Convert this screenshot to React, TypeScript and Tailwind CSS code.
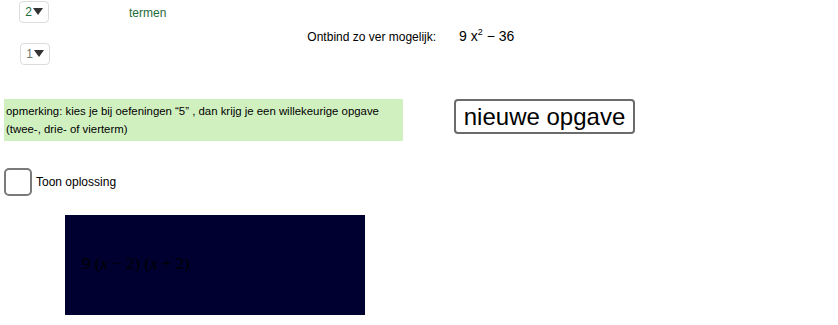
import React from "react";

const Dropdown = (props: { value: string; green?: boolean }) => {
  return (
    <div className="flex h-[22px] w-[30px] items-center justify-center gap-[1px] rounded-[4px] border border-[#dcdcdc] bg-white">
      <span
        className={
          props.green
            ? "text-[12px] leading-none text-[#1e6b3a]"
            : "text-[12px] leading-none text-[#6b7c6b]"
        }
      >
        {props.value}
      </span>
      <svg width="10" height="8" viewBox="0 0 10 8">
        <path d="M0 0 L10 0 L5 7 Z" fill="#333" />
      </svg>
    </div>
  );
};

export default function App() {
  return (
    <div className="flex h-[325px] w-[838px] flex-col overflow-hidden bg-white font-['Liberation_Sans',Arial,sans-serif] text-black">
      {/* bovenste rij: keuzes en opgave */}
      <div className="flex items-start pl-[19px] pt-[1px]">
        <div className="flex flex-col gap-[20px]">
          <Dropdown value="2" green />
          <div className="pl-[1px]">
            <Dropdown value="1" />
          </div>
        </div>
        <span className="ml-[79px] mt-[5px] text-[12px] leading-[14px] text-[#1e6b3a]">
          termen
        </span>
        <div className="ml-[141px] mt-[25px] flex items-baseline gap-[23px]">
          <span className="text-[12px]">Ontbind zo ver mogelijk:</span>
          <span className="text-[14px]">
            9 x<sup className="top-[-6px] text-[9px]">2</sup> − 36
          </span>
        </div>
      </div>

      {/* opmerking en knop */}
      <div className="mt-[34px] flex items-start pl-[4px]">
        <div className="flex h-[42px] w-[399px] flex-col justify-center bg-[#d0f0c0] px-[2px] text-[11.4px] leading-[18px]">
          <span>opmerking: kies je bij oefeningen “5” , dan krijg je een willekeurige opgave</span>
          <span>(twee-, drie- of vierterm)</span>
        </div>
        <button className="ml-[51px] flex h-[35px] w-[181px] items-center justify-center rounded-[4px] border-2 border-[#6b6b6b] bg-white text-[24px] leading-none">
          nieuwe opgave
        </button>
      </div>

      {/* checkbox */}
      <label className="mt-[27px] flex items-center gap-[4px] pl-[4px]">
        <span className="block h-[28px] w-[28px] rounded-[5px] border-2 border-[#7a7a7a] bg-white" />
        <span className="text-[12px]">Toon oplossing</span>
      </label>

      {/* oplossing */}
      <div className="mt-[19px] pl-[65px]">
        <div className="flex h-[100px] w-[300px] items-center bg-[#000030] pb-[2px] pl-[17px]">
          <span className="font-['Liberation_Serif',serif] text-[17px] text-black">
            9 (<i>x</i> − 2) (<i>x</i> + 2)
          </span>
        </div>
      </div>
    </div>
  );
}
